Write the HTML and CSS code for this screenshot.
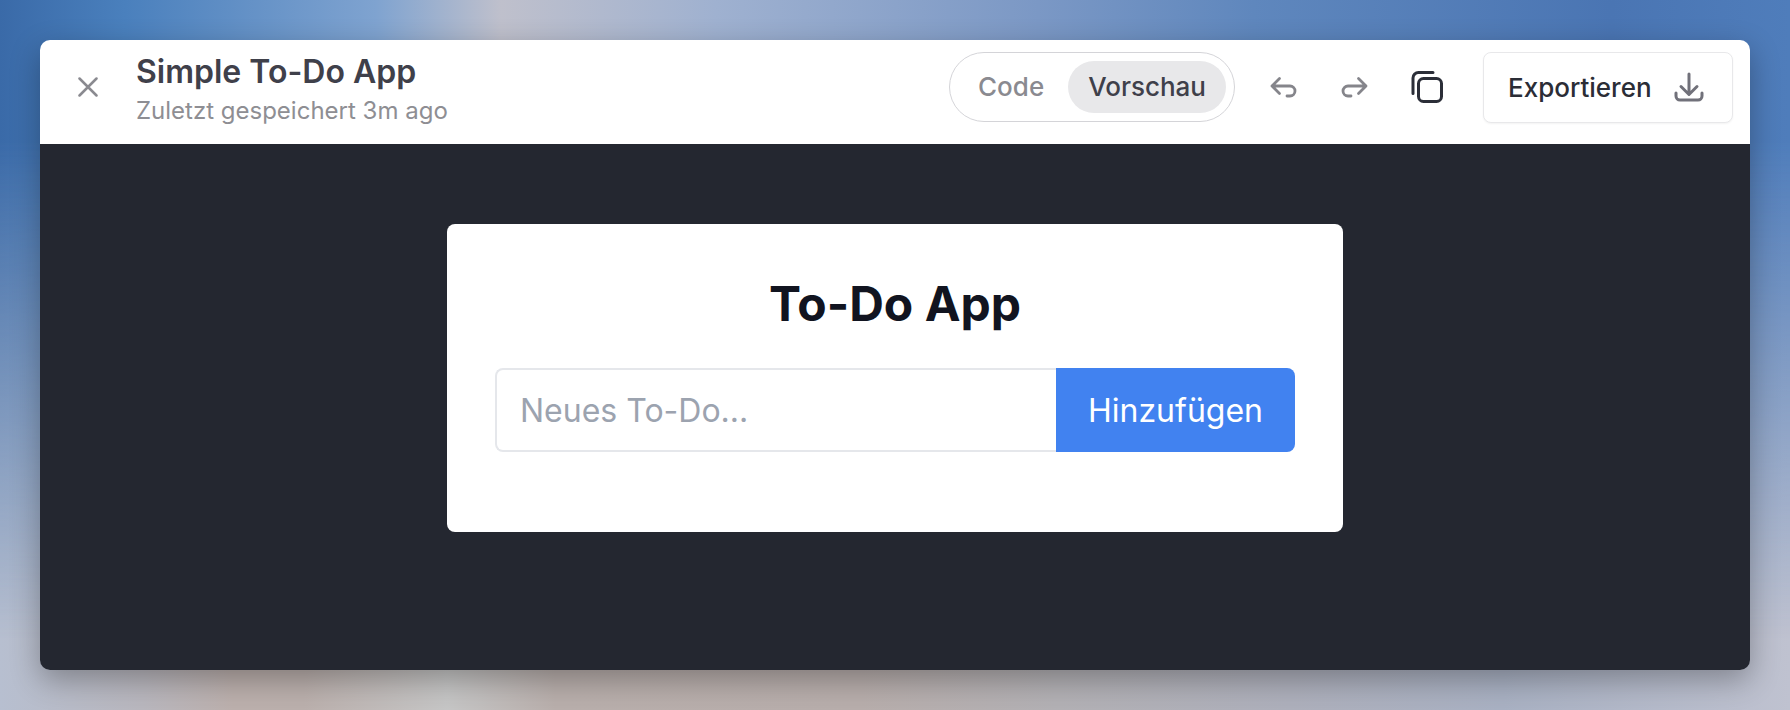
FILE: index.html
```html
<!DOCTYPE html>
<html lang="en">
<head>
    <meta charset="UTF-8">
    <meta name="viewport" content="width=device-width, initial-scale=1.0">
    <title>Simple To-Do App</title>
    <link rel="stylesheet" href="styles.css">
</head>
<body>
    <div class="window">
        <div class="header">
            <button class="close-btn" aria-label="Close">
                <svg width="20" height="20" viewBox="0 0 20 20"><path d="M1.5 1.5l17 17M18.5 1.5l-17 17"/></svg>
            </button>
            <div class="titles">
                <div class="app-title">Simple To-Do App</div>
                <div class="saved">Zuletzt gespeichert 3m ago</div>
            </div>
            <div class="tabs">
                <span class="tab">Code</span>
                <span class="tab active">Vorschau</span>
            </div>
            <button class="icon-btn" aria-label="Undo">
                <svg width="28" height="22" viewBox="0 0 28 22"><path d="M9.500 2.500L2 10l7.500 7.500M2 10h18a5 5 0 0 1 0 10h-3"/></svg>
            </button>
            <button class="icon-btn" aria-label="Redo">
                <svg width="28" height="22" viewBox="0 0 28 22"><path d="M18.500 2.500L26 10l-7.500 7.500M26 10H8a5 5 0 0 0 0 10h3"/></svg>
            </button>
            <button class="copy-btn" aria-label="Copy">
                <svg width="32" height="32" viewBox="0 0 32 32"><rect x="7.500" y="7.500" width="23" height="23" rx="5"/><path d="M2 22.500V7a5.500 5.500 0 0 1 5.500-5.500H22"/></svg>
            </button>
            <button class="export-btn">
                <span>Exportieren</span>
                <svg width="30" height="30" viewBox="0 0 30 30"><path d="M15 2v20M7 14.500l8 8 8-8M2 21v3a4 4 0 0 0 4 4h18a4 4 0 0 0 4-4v-3"/></svg>
            </button>
        </div>
        <div class="preview">
            <div class="card">
                <h1>To-Do App</h1>
                <form class="todo-form">
                    <input type="text" placeholder="Neues To-Do...">
                    <button type="button">Hinzufügen</button>
                </form>
            </div>
        </div>
    </div>
</body>
</html>
```

FILE: styles.css
```css
* {
    box-sizing: border-box;
}
body {
    position: relative;
    height: 710px;
    margin: 0;
    padding: 40px;
    overflow: hidden;
    font-family: Inter, "Noto Sans", sans-serif;
    background: linear-gradient(to right, #b7bfd0 0, #b9b7be 8%, #bcb0ad 13%, #bbb0ad 17%, #c6c6c6 25%, #b9afac 31%, #b8aeac 48%, #b3b1b5 59%, #aeb0bc 72%, #a9b1c3 84%, #bfc2d0 100%);
}
/* blurred wallpaper, top half fades out over the warm bottom */
body::before {
    content: "";
    position: absolute;
    inset: 0;
    background: linear-gradient(to right, #3a6aa8 0, #4a80bd 7%, #7fa3d0 21%, #bfc0cc 28%, #9fb1d0 40%, #7b98c5 58%, #5f87bd 70%, #4a75b3 90%, #4f7dbb 100%);
    -webkit-mask-image: linear-gradient(to bottom, #000 0, #000 20%, transparent 90%);
    mask-image: linear-gradient(to bottom, #000 0, #000 20%, transparent 90%);
}
button {
    font-family: inherit;
    background: none;
    border: none;
    padding: 0;
}
svg {
    display: block;
    fill: none;
    stroke: currentColor;
    stroke-linecap: round;
    stroke-linejoin: round;
}
.window {
    position: relative;
    display: flex;
    flex-direction: column;
    height: 630px;
    border-radius: 10px;
    overflow: hidden;
    box-shadow: 0 10px 30px rgba(0, 0, 0, 0.3);
}
.header {
    display: flex;
    align-items: center;
    height: 104px;
    flex-shrink: 0;
    padding: 0 17px 10px 38px;
    background: #fff;
}
.close-btn {
    color: #8a8a90;
    margin-right: 38px;
}
.close-btn svg {
    stroke-width: 2.5;
}
.titles {
    flex: 1;
    padding-top: 5px;
}
.app-title {
    font-size: 32px;
    font-weight: 600;
    line-height: 40px;
    color: #3f404a;
}
.saved {
    margin-top: 3px;
    font-size: 24px;
    line-height: 32px;
    color: #8e8e93;
}
.tabs {
    display: flex;
    align-items: center;
    gap: 4px;
    height: 70px;
    padding: 0 8px;
    border: 1px solid #d4d4d8;
    border-radius: 35px;
}
.tab {
    height: 52px;
    padding: 0 20px;
    border-radius: 26px;
    font-size: 26px;
    font-weight: 500;
    line-height: 52px;
    color: #8a8a90;
}
.tab.active {
    background: #e8e8ea;
    color: #3f404a;
}
.icon-btn {
    color: #85858b;
    margin-left: 35px;
}
.icon-btn + .icon-btn {
    margin-left: 42px;
}
.icon-btn svg {
    stroke-width: 2.8;
}
.copy-btn {
    color: #2b2e38;
    margin: 0 40px 0 43px;
}
.copy-btn svg {
    stroke-width: 3;
}
.export-btn {
    display: flex;
    align-items: center;
    gap: 22px;
    width: 250px;
    height: 71px;
    padding: 0 24px;
    background: #fff;
    border: 1px solid #e8e8ea;
    border-radius: 8px;
    box-shadow: 0 1px 2px rgba(0, 0, 0, 0.05);
    font-size: 26px;
    font-weight: 500;
    color: #2b2d36;
}
.export-btn svg {
    color: #71717a;
    stroke-width: 3;
}
.preview {
    flex: 1;
    padding-top: 80px;
    background: #242730;
}
.card {
    width: 896px;
    height: 308px;
    margin: 0 auto;
    padding: 48px;
    background: #fff;
    border-radius: 8px;
}
.card h1 {
    margin: 0 0 32px;
    font-size: 48px;
    font-weight: 700;
    line-height: 64px;
    text-align: center;
    color: #111420;
}
.todo-form {
    display: flex;
}
.todo-form input {
    flex: 1;
    min-width: 0;
    height: 84px;
    padding: 0 23px;
    border: 2px solid #e5e7eb;
    border-right: none;
    border-radius: 8px 0 0 8px;
    font-family: inherit;
    font-size: 32px;
    outline: none;
}
.todo-form input::placeholder {
    color: #9ca3af;
}
.todo-form button {
    width: 239px;
    height: 84px;
    background: #4182f0;
    border-radius: 0 8px 8px 0;
    font-size: 32px;
    color: #fff;
}
```
